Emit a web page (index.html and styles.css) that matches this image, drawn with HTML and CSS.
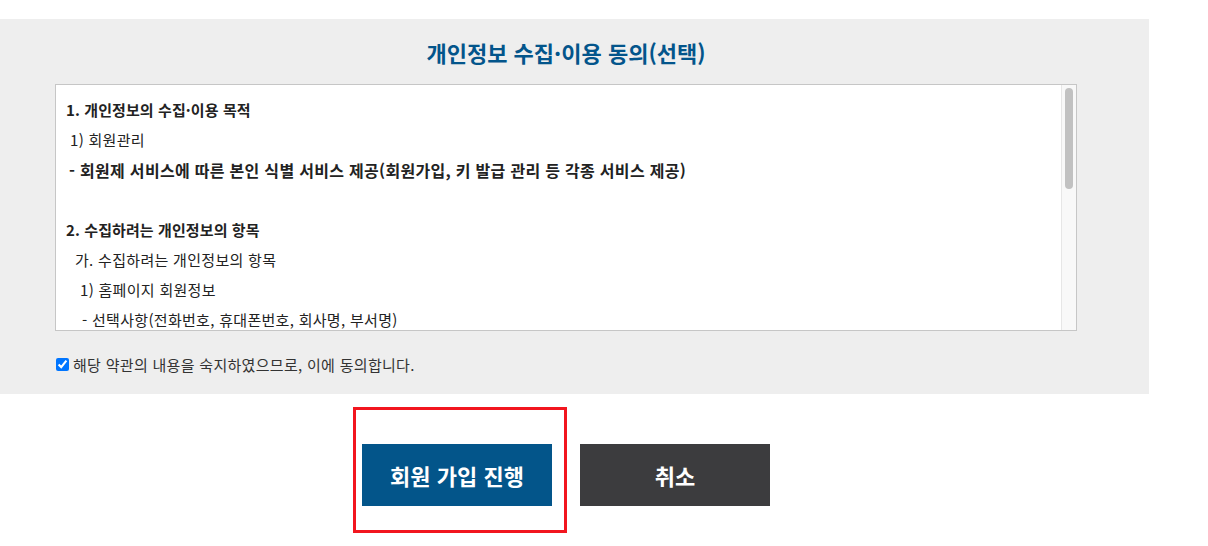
FILE: index.html
```html
<!DOCTYPE html>
<html lang="ko">
<head>
<meta charset="utf-8">
<title>개인정보 수집·이용 동의(선택)</title>
<link rel="stylesheet" href="styles.css">
</head>
<body>
<section class="agree-panel">
  <h2 class="agree-title">개인정보 수집·이용 동의(선택)</h2>
  <div class="terms-box">
    <div class="terms-scroll">
      <p class="t-head">1. 개인정보의 수집·이용 목적</p>
      <p class="t-i1">1) 회원관리</p>
      <p class="t-strong">- 회원제 서비스에 따른 본인 식별 서비스 제공(회원가입, 키 발급 관리 등 각종 서비스 제공)</p>
      <p class="t-blank">&nbsp;</p>
      <p class="t-head">2. 수집하려는 개인정보의 항목</p>
      <p class="t-i2">가. 수집하려는 개인정보의 항목</p>
      <p class="t-i3">1) 홈페이지 회원정보</p>
      <p class="t-i4">- 선택사항(전화번호, 휴대폰번호, 회사명, 부서명)</p>
      <p class="t-i2">나. 개인정보 수집방법</p>
      <p class="t-i4">- 홈페이지(회원가입)</p>
      <p class="t-blank">&nbsp;</p>
      <p class="t-head">3. 개인정보의 보유 및 이용기간</p>
      <p class="t-i4">- 회원 탈퇴 시까지</p>
      <p class="t-blank">&nbsp;</p>
      <p class="t-head">4. 동의를 거부할 권리 및 동의 거부에 따른 불이익</p>
      <p class="t-i4">- 귀하는 개인정보 수집·이용에 대한 동의를 거부할 권리가 있습니다.</p>
      <p class="t-i4">- 동의를 거부하시는 경우에도 회원가입 및 서비스 이용이 가능합니다.</p>
    </div>
    <div class="fake-scroll" aria-hidden="true">
      <div class="fake-thumb"></div>
    </div>
  </div>
  <label class="agree-check">
    <input type="checkbox" checked>
    <span>해당 약관의 내용을 숙지하였으므로, 이에 동의합니다.</span>
  </label>
</section>
<div class="btn-row">
  <div class="btn-mark">
    <button type="button" class="btn btn-primary">회원 가입 진행</button>
  </div>
  <button type="button" class="btn btn-dark">취소</button>
</div>
</body>
</html>
```

FILE: styles.css
```css
html, body {
  margin: 0;
  padding: 0;
  background: #ffffff;
}

body {
  padding-top: 19px;
  padding-bottom: 40px;
  font-family: "Noto Sans CJK KR", "Noto Sans", sans-serif;
  color: #222222;
}

.agree-panel {
  width: 1149px;
  box-sizing: border-box;
  background: #eeeeee;
  padding: 20px 0 17px 55px;
}

.agree-title {
  width: 1022px;
  margin: 0 0 19px 0;
  text-align: center;
  font-size: 22px;
  line-height: 26px;
  font-weight: 700;
  color: #03558b;
}

.terms-box {
  display: flex;
  width: 1022px;
  height: 247px;
  box-sizing: border-box;
  border: 1px solid #c6c6c6;
  background: #ffffff;
}

.terms-scroll {
  flex: 1;
  min-width: 0;
  padding: 10px;
  overflow: hidden;
}

.fake-scroll {
  width: 15px;
  box-sizing: border-box;
  flex: none;
  background: #f8f8f8;
  border-left: 1px solid #e6e6e6;
  padding: 3px 3px 0 3px;
}

.fake-thumb {
  width: 8px;
  height: 101px;
  border-radius: 5px;
  background: #c1c1c1;
}

.terms-scroll p {
  margin: 0;
  font-size: 15px;
  line-height: 30px;
  letter-spacing: 0.3px;
  white-space: nowrap;
  color: #222222;
}

.terms-scroll .t-head {
  font-weight: 700;
  letter-spacing: 0.1px;
}

.terms-scroll .t-i1 {
  padding-left: 4px;
}

.terms-scroll .t-strong {
  padding-left: 3px;
  font-size: 16px;
  font-weight: 700;
}

.terms-scroll .t-i2 {
  padding-left: 9px;
}

.terms-scroll .t-i3 {
  padding-left: 14px;
}

.terms-scroll .t-i4 {
  padding-left: 16px;
}

.agree-check {
  display: flex;
  align-items: center;
  margin-top: 20px;
  height: 26px;
  font-size: 15px;
  letter-spacing: 0.3px;
  color: #333333;
}

.agree-check input {
  width: 13px;
  height: 13px;
  margin: 0 4px 0 1px;
}

.btn-row {
  width: 1132px;
  display: flex;
  justify-content: center;
  gap: 28px;
  margin-top: 50px;
}

.btn-mark {
  position: relative;
}

.btn-mark::after {
  content: "";
  position: absolute;
  left: -9px;
  top: -37px;
  width: 214px;
  height: 126px;
  box-sizing: border-box;
  border: 3px solid #f2161f;
  pointer-events: none;
}

.btn {
  display: block;
  width: 190px;
  height: 62px;
  border: 0;
  margin: 0;
  padding: 0;
  font-family: "Noto Sans CJK KR", "Noto Sans", sans-serif;
  font-size: 22px;
  font-weight: 700;
  color: #ffffff;
  cursor: pointer;
}

.btn-primary {
  background: #03558a;
}

.btn-dark {
  background: #3c3c3e;
}
```
